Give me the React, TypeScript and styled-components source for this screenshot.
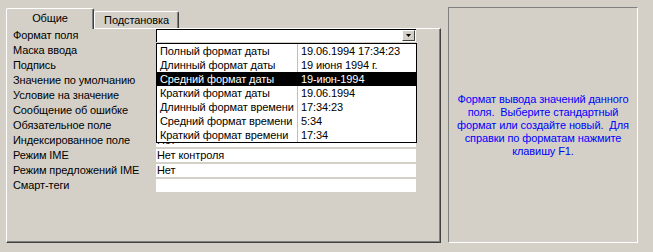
import React from "react"
import styled, { createGlobalStyle } from "styled-components"

const GlobalStyle = createGlobalStyle`
  html, body {
    margin: 0;
    padding: 0;
    background: #d4d0c8;
  }
  body {
    font-family: "Liberation Sans", Arial, sans-serif;
    font-size: 11px;
    letter-spacing: -0.1px;
    color: #000;
  }
`

const Window = styled.div`
  display: flex;
  gap: 7px;
  width: 653px;
  height: 252px;
  box-sizing: border-box;
  padding: 7px 15px 9px 6px;
  background: #d4d0c8;
`

const TabArea = styled.div`
  display: flex;
  flex-direction: column;
  width: 435px;
`

const TabStrip = styled.div`
  display: flex;
  align-items: flex-end;
  height: 21px;
`

const Tab = styled.div<{ $active?: boolean }>`
  position: relative;
  z-index: ${(p) => (p.$active ? 2 : 1)};
  box-sizing: border-box;
  display: flex;
  align-items: center;
  justify-content: center;
  width: ${(p) => (p.$active ? 88 : 85)}px;
  height: ${(p) => (p.$active ? 21 : 17)}px;
  margin-bottom: ${(p) => (p.$active ? -1 : 0)}px;
  padding-bottom: ${(p) => (p.$active ? 2 : 0)}px;
  background: #d4d0c8;
  border-top: 1px solid #fff;
  border-left: 1px solid #fff;
  border-right: 1px solid #404040;
  border-top-left-radius: 2px;
  border-top-right-radius: 2px;
  box-shadow: inset -1px 0 0 #808080;
`

const Panel = styled.div`
  position: relative;
  flex: 1;
  box-sizing: border-box;
  border-top: 1px solid #fff;
  border-left: 1px solid #fff;
  border-right: 1px solid #404040;
  border-bottom: 1px solid #404040;
  box-shadow: inset -1px -1px 0 #808080;
  padding: 0 0 0 6px;
`

const Grid = styled.div`
  display: grid;
  grid-template-columns: 143px 260px;
  grid-auto-rows: 13px;
  row-gap: 2px;
`

const Label = styled.div`
  line-height: 13px;
  white-space: nowrap;
`

const Field = styled.div`
  background: #fff;
  line-height: 13px;
  padding-left: 1px;
  white-space: nowrap;
`

const Combo = styled.div`
  position: relative;
  box-sizing: border-box;
  background: #fff;
  border-top: 1px solid #000;
  border-left: 1px solid #000;
`

const DropButton = styled.div`
  position: absolute;
  right: 1px;
  top: 0;
  width: 13px;
  height: 11px;
  box-sizing: border-box;
  background: #d4d0c8;
  border-top: 1px solid #fff;
  border-left: 1px solid #fff;
  border-right: 1px solid #404040;
  border-bottom: 1px solid #404040;
  display: flex;
  align-items: center;
  justify-content: center;
`

const DropList = styled.div`
  position: absolute;
  left: 149px;
  top: 14px;
  z-index: 3;
  width: 261px;
  box-sizing: border-box;
  background: #fff;
  border: 1px solid #000;
`

const Option = styled.div<{ $selected?: boolean }>`
  display: grid;
  grid-template-columns: 141px 1fr;
  height: 14px;
  line-height: 14px;
  background: ${(p) => (p.$selected ? "#000" : "#fff")};
  color: ${(p) => (p.$selected ? "#fff" : "#000")};
`

const OptionCell = styled.div<{ $selected?: boolean; $first?: boolean }>`
  padding-left: 3px;
  white-space: nowrap;
  overflow: hidden;
  border-right: ${(p) => (p.$first ? `1px solid ${p.$selected ? "#000" : "#c0c0c0"}` : "none")};
`

const HelpBox = styled.div`
  width: 190px;
  box-sizing: border-box;
  border-top: 1px solid #808080;
  border-left: 1px solid #808080;
  border-right: 1px solid #fff;
  border-bottom: 1px solid #fff;
  display: flex;
  align-items: center;
  justify-content: center;
  padding: 0 6px;
  text-align: center;
  color: #0000ff;
  line-height: 13px;
`

const rows: [string, string | null][] = [
  ["Формат поля", null],
  ["Маска ввода", ""],
  ["Подпись", ""],
  ["Значение по умолчанию", ""],
  ["Условие на значение", ""],
  ["Сообщение об ошибке", ""],
  ["Обязательное поле", ""],
  ["Индексированное поле", "Нет"],
  ["Режим IME", "Нет контроля"],
  ["Режим предложений IME", "Нет"],
  ["Смарт-теги", ""],
]

const formats = [
  ["Полный формат даты", "19.06.1994 17:34:23"],
  ["Длинный формат даты", "19 июня 1994 г."],
  ["Средний формат даты", "19-июн-1994"],
  ["Краткий формат даты", "19.06.1994"],
  ["Длинный формат времени", "17:34:23"],
  ["Средний формат времени", "5:34"],
  ["Краткий формат времени", "17:34"],
]

export default function App() {
  return (
    <Window>
      <GlobalStyle />
      <TabArea>
        <TabStrip>
          <Tab $active>Общие</Tab>
          <Tab>Подстановка</Tab>
        </TabStrip>
        <Panel>
          <Grid>
            {rows.map(([label, value]) => (
              <React.Fragment key={label}>
                <Label>{label}</Label>
                {value === null ? (
                  <Combo>
                    <DropButton>
                      <svg width="5" height="3" viewBox="0 0 5 3">
                        <path d="M0 0h5L2.5 3z" fill="#000" />
                      </svg>
                    </DropButton>
                  </Combo>
                ) : (
                  <Field>{value}</Field>
                )}
              </React.Fragment>
            ))}
          </Grid>
          <DropList>
            {formats.map(([name, sample], i) => (
              <Option key={name} $selected={i === 2}>
                <OptionCell $first $selected={i === 2}>{name}</OptionCell>
                <OptionCell>{sample}</OptionCell>
              </Option>
            ))}
          </DropList>
        </Panel>
      </TabArea>
      <HelpBox>
        Формат вывода значений данного поля.&nbsp; Выберите стандартный формат или создайте новый.&nbsp; Для справки по форматам нажмите клавишу F1.
      </HelpBox>
    </Window>
  )
}
